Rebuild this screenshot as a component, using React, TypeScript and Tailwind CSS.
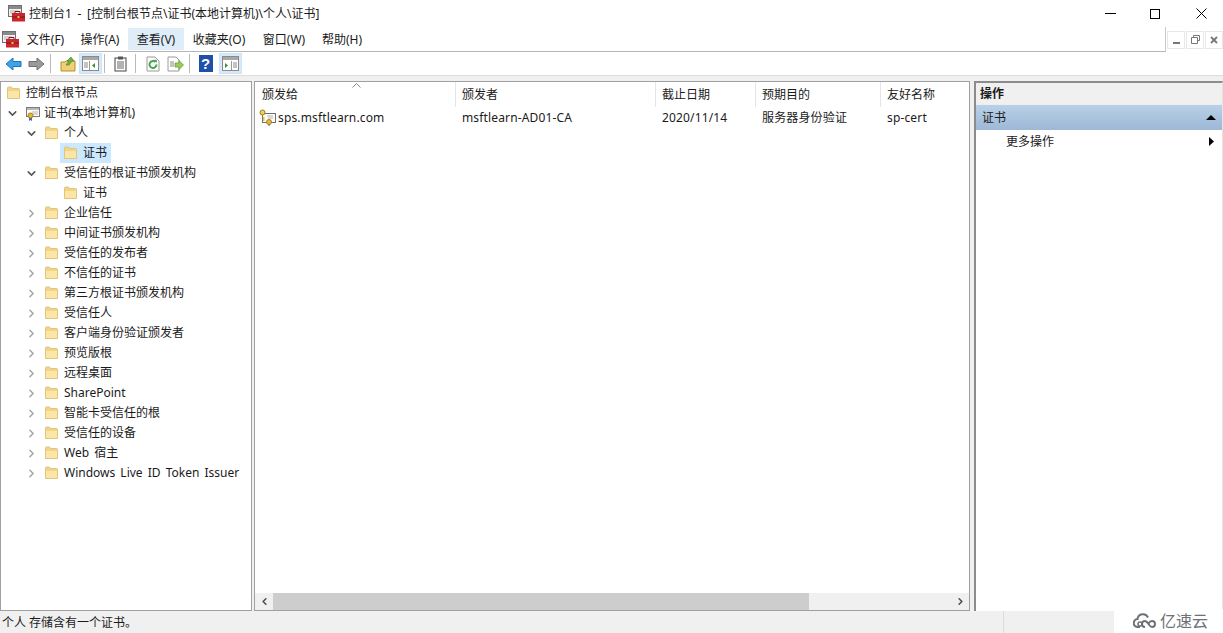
import { ChevronDown, ChevronRight, ChevronLeft } from "lucide-react";

const font = "font-['Noto_Sans','Noto_Sans_CJK_SC',sans-serif]";

type TreeRow = {
  label: string;
  depth: number;
  open?: boolean;
  leaf?: boolean;
  selected?: boolean;
};

const rows: TreeRow[] = [
  { label: "个人", depth: 0, open: true },
  { label: "证书", depth: 1, leaf: true, selected: true },
  { label: "受信任的根证书颁发机构", depth: 0, open: true },
  { label: "证书", depth: 1, leaf: true },
  { label: "企业信任", depth: 0 },
  { label: "中间证书颁发机构", depth: 0 },
  { label: "受信任的发布者", depth: 0 },
  { label: "不信任的证书", depth: 0 },
  { label: "第三方根证书颁发机构", depth: 0 },
  { label: "受信任人", depth: 0 },
  { label: "客户端身份验证颁发者", depth: 0 },
  { label: "预览版根", depth: 0 },
  { label: "远程桌面", depth: 0 },
  { label: "SharePoint", depth: 0 },
  { label: "智能卡受信任的根", depth: 0 },
  { label: "受信任的设备", depth: 0 },
  { label: "Web 宿主", depth: 0 },
  { label: "Windows Live ID Token Issuer", depth: 0 },
];

const menus = [
  { label: "文件(F)", w: "w-[53px]" },
  { label: "操作(A)", w: "w-[56px]" },
  { label: "查看(V)", w: "w-[56px]", active: true },
  { label: "收藏夹(O)", w: "w-[70px]" },
  { label: "窗口(W)", w: "w-[60px]" },
  { label: "帮助(H)", w: "w-[56px]" },
];

const columns = [
  { label: "颁发给", value: "sps.msftlearn.com", w: "w-[200px]", head: "w-[201px] pl-[7px]", first: true },
  { label: "颁发者", value: "msftlearn-AD01-CA", w: "w-[200px]", head: "w-[200px] pl-[6px]" },
  { label: "截止日期", value: "2020/11/14", w: "w-[100px]", head: "w-[100px] pl-[6px]" },
  { label: "预期目的", value: "服务器身份验证", w: "w-[125px]", head: "w-[125px] pl-[6px]" },
  { label: "友好名称", value: "sp-cert", w: "w-[88px]", head: "w-[87px] pl-[6px]" },
];

function Folder() {
  return (
    <svg width="15" height="14" viewBox="0 0 15 14" className="shrink-0">
      <path d="M1.500 12.500V2q0-1 1-1h3l1 1.500h6q1 0 1 1v9z" fill="#f2d488" stroke="#e0c57f" />
      <path d="M2 5h11v7H2z" fill="#fbe6a8" />
    </svg>
  );
}

function AppIcon() {
  return (
    <svg width="17" height="17" viewBox="0 0 17 17" className="shrink-0">
      <rect x="0.500" y="0.500" width="13" height="11" fill="#f4f4f4" stroke="#707070" />
      <path d="M1 1h12v3H1z" fill="#8a8a8a" />
      <path d="M2 6h8M2 8h5" stroke="#b0b0b0" />
      <path d="M7 8V6.500h5V8" fill="none" stroke="#7a1519" />
      <rect x="4" y="8" width="13" height="8.500" fill="#cb252d" />
      <path d="M4 12h13" stroke="#7f1418" />
      <rect x="9.500" y="11" width="2" height="2" fill="#f0c040" />
    </svg>
  );
}

function CertIcon() {
  return (
    <svg width="16" height="16" viewBox="0 0 16 16" className="shrink-0">
      <rect x="2.500" y="2.500" width="13" height="9" fill="#fdfdf6" stroke="#7b7b7b" />
      <path d="M3 3h12v2H3z" fill="#b8b8b8" />
      <path d="M8 7h6M9 9h5" stroke="#b5b5b5" />
      <path d="M5 12v4l1.500-1 1.500 1v-4" fill="#4468b0" />
      <circle cx="6.500" cy="10.500" r="2.500" fill="#e7b93a" stroke="#a97f1d" />
    </svg>
  );
}

function KeyCertIcon() {
  return (
    <svg width="17" height="17" viewBox="0 0 17 17" className="shrink-0">
      <rect x="3.500" y="4.500" width="13" height="9" fill="#fdfdf6" stroke="#6f6f6f" />
      <path d="M8 7h6M9 9h5" stroke="#b5b5b5" />
      <circle cx="3.500" cy="3.500" r="2.500" fill="#f0d060" stroke="#9a7a18" />
      <path d="M3.500 6v6M3.500 9h2M3.500 11h2" stroke="#9a7a18" />
      <path d="M9 14v3l1-1 1 1v-3" fill="#4468b0" />
      <circle cx="10" cy="13" r="2.500" fill="#e7b93a" stroke="#a97f1d" />
    </svg>
  );
}

function ArrowIcon({ back, color, edge }: { back?: boolean; color: string; edge: string }) {
  return (
    <svg width="17" height="14" viewBox="0 0 17 14" className={back ? "" : "-scale-x-100"}>
      <path d="M1 7l7-6v3.500h8v5H8V13z" fill={color} stroke={edge} />
    </svg>
  );
}

function ToolButton({ children, active }: { children: React.ReactNode; active?: boolean }) {
  return (
    <div
      className={`flex h-[21px] w-[23px] shrink-0 items-center justify-center ${
        active ? "border border-[#cce4f7] bg-[#d8eaf9]" : ""
      }`}
    >
      {children}
    </div>
  );
}

function PaneIcon({ right }: { right?: boolean }) {
  return (
    <svg width="17" height="15" viewBox="0 0 17 15">
      <rect x="0.500" y="0.500" width="16" height="14" fill="#fff" stroke="#8a8a8a" />
      <path d="M1 1h15v3H1z" fill="#a8a8a8" />
      {right ? (
        <>
          <path d="M3 7l3 2.500-3 2.500z" fill="#3c8c3c" />
          <path d="M9.500 5v9" stroke="#999" />
          <path d="M11 7h4M11 9h4M11 11h4" stroke="#888" />
        </>
      ) : (
        <>
          <path d="M2 7h4M2 9h4M2 11h4" stroke="#888" />
          <path d="M7.500 5v9" stroke="#999" />
          <path d="M13 7l-3 2.500 3 2.500z" fill="#3c8c3c" />
        </>
      )}
    </svg>
  );
}

function Sep({ className }: { className: string }) {
  return <div className={`h-[19px] w-px shrink-0 bg-[#b9b9b9] ${className}`} />;
}

function Toolbar() {
  return (
    <div className="flex h-[23px] items-center bg-white pl-[2px]">
      <ToolButton>
        <ArrowIcon back color="#3fa3e8" edge="#1f73b8" />
      </ToolButton>
      <ToolButton>
        <ArrowIcon color="#9a9a9a" edge="#707070" />
      </ToolButton>
      <Sep className="ml-[2px] mr-[5px]" />
      <ToolButton>
        <svg width="16" height="16" viewBox="0 0 16 16">
          <path d="M1 6h4l1-1h9v10H1z" fill="#f1cf77" stroke="#b58d34" />
          <path d="M6 9l3-4H7l4-4 3 4h-2l-3 4z" fill="#6db33f" stroke="#467f23" strokeWidth="0.600" />
        </svg>
      </ToolButton>
      <ToolButton active>
        <PaneIcon />
      </ToolButton>
      <Sep className="ml-[2px] mr-[4px]" />
      <ToolButton>
        <svg width="13" height="16" viewBox="0 0 13 16">
          <rect x="1" y="2" width="11" height="13" fill="#fff" stroke="#444" />
          <rect x="4" y="0.500" width="5" height="3" fill="#555" />
          <path d="M3 6h7M3 8h7M3 10h7M3 12h7" stroke="#666" />
        </svg>
      </ToolButton>
      <Sep className="ml-[3px] mr-[5px]" />
      <ToolButton>
        <svg width="14" height="16" viewBox="0 0 14 16">
          <path d="M1 1h8l4 4v10H1z" fill="#fff" stroke="#9a9a9a" />
          <path d="M10.500 8.500a3.500 3.500 0 1 1-1-2.500" fill="none" stroke="#4da34d" strokeWidth="2" />
          <path d="M8 3.500l3 .5-.5 3z" fill="#4da34d" />
        </svg>
      </ToolButton>
      <ToolButton>
        <svg width="17" height="16" viewBox="0 0 17 16">
          <path d="M1 1h8l3 3v11H1z" fill="#fff" stroke="#9a9a9a" />
          <path d="M3 6h4M3 8h4M3 10h4" stroke="#888" />
          <path d="M8 7h4V4.500L16.500 9 12 13.500V11H8z" fill="#98cc5c" stroke="#5e9a2c" strokeWidth="0.700" />
        </svg>
      </ToolButton>
      <Sep className="ml-[2px] mr-[4px]" />
      <ToolButton>
        <div className="flex h-[17px] w-[14px] items-center justify-center bg-[#1f4fa8] font-['Liberation_Sans',sans-serif] text-[15px] font-bold text-white">
          ?
        </div>
      </ToolButton>
      <div className="w-[2px]" />
      <ToolButton active>
        <PaneIcon right />
      </ToolButton>
    </div>
  );
}

function Tree() {
  return (
    <div className="h-[530px] w-[252px] shrink-0 border border-[#a0a0a0] bg-white pt-px">
      <div className="flex h-5 items-center gap-[5px] pl-[5px]">
        <Folder />
        <span>控制台根节点</span>
      </div>
      <div className="flex h-5 items-center pl-[5px]">
        <ChevronDown size={13} strokeWidth={2.800} className="text-[#555]" />
        <div className="ml-[5px] flex items-center gap-[4px]">
          <CertIcon />
          <span>证书(本地计算机)</span>
        </div>
      </div>
      {rows.map((row, i) => (
        <div key={i} className="flex h-5 items-center">
          {row.depth === 1 ? (
            <div className="w-[59px] shrink-0" />
          ) : (
            <div className="flex w-[41px] shrink-0 justify-end pr-[4px]">
              {row.open ? (
                <ChevronDown size={13} strokeWidth={2.800} className="text-[#555]" />
              ) : (
                <ChevronRight size={13} strokeWidth={2.800} className="text-[#a6a6a6]" />
              )}
            </div>
          )}
          <div
            className={`flex h-5 items-center gap-[5px] ${
              row.depth === 1 ? "pl-[3px] pr-[4px]" : "pl-[2px]"
            } ${row.selected ? "bg-[#cce8ff]" : ""}`}
          >
            <Folder />
            <span className="[word-spacing:2px]">{row.label}</span>
          </div>
        </div>
      ))}
    </div>
  );
}

function CertList() {
  return (
    <div className="flex h-[530px] w-[716px] shrink-0 flex-col border border-[#a0a0a0] bg-white">
      <div className="relative flex h-[25px]">
        {columns.map((c, i) => (
          <div
            key={c.label}
            className={`flex ${c.head} shrink-0 items-center pt-px ${
              i < columns.length - 1 ? "border-r border-[#e5e5e5]" : ""
            }`}
          >
            {c.label}
          </div>
        ))}
        <svg width="9" height="5" viewBox="0 0 9 5" className="absolute left-[97px] top-[1px]">
          <path d="M0.500 4.500L4.500 0.500l4 4" fill="none" stroke="#8a8a8a" />
        </svg>
      </div>
      <div className="flex h-[20px] items-center pt-px tracking-[0.15px]">
        {columns.map((c) => (
          <div key={c.label} className={`flex ${c.w} shrink-0 items-center pl-[7px]`}>
            {c.first ? (
              <div className="-ml-[3px] flex items-center gap-[2px]">
                <KeyCertIcon />
                <span>{c.value}</span>
              </div>
            ) : (
              c.value
            )}
          </div>
        ))}
      </div>
      <div className="flex-1" />
      <div className="flex h-[17px] items-center bg-[#f0f0f0]">
        <div className="flex w-[18px] justify-center">
          <ChevronLeft size={11} strokeWidth={3.500} className="text-[#505050]" />
        </div>
        <div className="h-[17px] w-[536px] bg-[#cdcdcd]" />
        <div className="flex-1" />
        <div className="flex w-[18px] justify-center">
          <ChevronRight size={11} strokeWidth={3.500} className="text-[#505050]" />
        </div>
      </div>
    </div>
  );
}

function Actions() {
  return (
    <div className="h-[530px] w-[249px] shrink-0 border-l-2 border-r border-t-2 border-l-[#8c8c8c] border-r-[#e4e4e4] border-t-[#8c8c8c] bg-white">
      <div className="flex h-[22px] items-center border-b border-[#e8eef4] bg-[#f0f0f0] pl-[4px] font-bold">
        操作
      </div>
      <div className="flex h-[25px] items-center justify-between bg-gradient-to-b from-[#b9d1e8] to-[#9db8d6] pl-[6px] pr-[6px]">
        <span>证书</span>
        <svg width="10" height="5" viewBox="0 0 10 5">
          <path d="M5 0l5 5H0z" fill="#000" />
        </svg>
      </div>
      <div className="flex h-[23px] items-center justify-between pl-[30px] pr-[8px]">
        <span>更多操作</span>
        <svg width="5" height="9" viewBox="0 0 5 9">
          <path d="M0 0l5 4.500L0 9z" fill="#000" />
        </svg>
      </div>
    </div>
  );
}

export default function App() {
  return (
    <div className={`flex h-[633px] w-[1223px] flex-col overflow-hidden bg-white ${font} text-[12px] leading-none text-[#1a1a1a]`}>
      {/* title bar */}
      <div className="flex h-[27px] items-center pl-[8px]">
        <AppIcon />
        <span className="ml-[4px] [word-spacing:2.500px]">控制台1 - [控制台根节点\证书(本地计算机)\个人\证书]</span>
        <div className="ml-auto flex items-center pr-[16px]">
          <div className="h-px w-[11px] bg-black" />
          <div className="ml-[34px] h-[10px] w-[10px] border border-black" />
          <svg width="11" height="11" viewBox="0 0 11 11" className="ml-[36px]">
            <path d="M0.500 0.500l10 10M10.500 0.500l-10 10" stroke="#000" />
          </svg>
        </div>
      </div>
      {/* menu bar */}
      <div className="flex h-[25px] items-stretch">
        <div className="flex flex-1 items-center border-b border-[#b5b5b5] pl-[2px]">
          <AppIcon />
          {menus.map((m) => (
            <div
              key={m.label}
              className={`flex h-[22px] ${m.w} items-center justify-center pt-px ${
                m.active ? "bg-[#deedf8]" : ""
              }`}
            >
              {m.label}
            </div>
          ))}
        </div>
        <div className="flex w-[58px] items-center gap-px border-l border-[#c8c8c8] pl-px">
          {["min", "restore", "close"].map((b) => (
            <div key={b} className="flex h-[18px] w-[18px] items-center justify-center border border-[#e8e8e8]">
              {b === "min" && <div className="mt-[6px] h-[2px] w-[7px] bg-[#777]" />}
              {b === "restore" && (
                <svg width="9" height="9" viewBox="0 0 9 9">
                  <path d="M2.500 2V.5h6v5H7M.5 2.500h6v6h-6z" fill="none" stroke="#777" />
                </svg>
              )}
              {b === "close" && (
                <svg width="8" height="8" viewBox="0 0 8 8">
                  <path d="M1 1l6 6M7 1L1 7" stroke="#777" strokeWidth="1.800" />
                </svg>
              )}
            </div>
          ))}
        </div>
      </div>
      <Toolbar />
      {/* panes */}
      <div className="flex h-[536px] gap-[2px] border-t border-[#dcdcdc] bg-[#f0f0f0] pt-[5px]">
        <Tree />
        <CertList />
        <div className="w-0" />
        <Actions />
      </div>
      {/* status bar */}
      <div className="relative flex flex-1 items-center bg-[#f0f0f0] pl-[2px] pt-px">
        <span>个人 存储含有一个证书。</span>
        <div className="absolute left-[1003px] top-0 h-full w-px bg-[#dcdcdc]" />
        <div className="absolute bottom-0 right-0 flex h-[24px] w-[109px] items-center gap-[1px] bg-white pl-[19px] text-[16px] text-[#6e7175]">
          <svg width="26" height="16" viewBox="0 0 26 16" className="shrink-0">
            <path
              d="M7 14H5a4 4 0 0 1-.5-8A5.500 5.500 0 0 1 15 4.500M12 14a3 3 0 0 1 0-6c3 0 4 6 7 6a3 3 0 0 0 0-6c-1.500 0-2.500 1-3.500 2.500"
              fill="none"
              stroke="#6e7175"
              strokeWidth="2"
            />
            <circle cx="7" cy="11" r="2" fill="none" stroke="#6e7175" strokeWidth="1.500" />
          </svg>
          <span>亿速云</span>
        </div>
      </div>
    </div>
  );
}
